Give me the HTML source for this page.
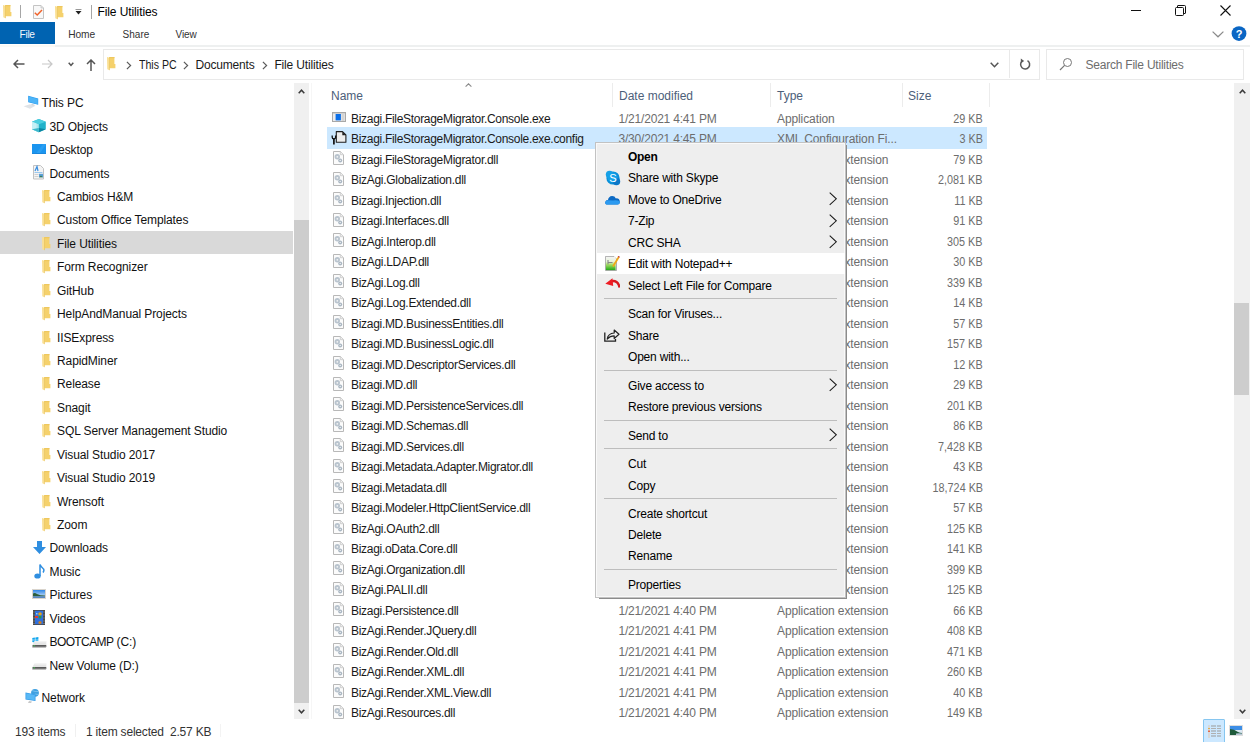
<!DOCTYPE html>
<html><head><meta charset="utf-8">
<style>
*{margin:0;padding:0;box-sizing:border-box}
html,body{width:1250px;height:742px;overflow:hidden;background:#fff}
body{position:relative;font-family:"Liberation Sans",sans-serif;font-size:12px}
.t{position:absolute;white-space:nowrap;line-height:14px;font-size:12px}
.i{position:absolute;display:block}
.b{position:absolute}
</style></head><body>

<svg class="i" style="left:2.7px;top:4.7px" width="9" height="14" viewBox="0 0 9 14"><path d="M2.2 0 H7.4 V7 H8.4 V11.3 H2.2 Z" fill="#f5d16c"/><path d="M2.2 0 H7.4 V1.2 H2.2 Z" fill="#eec75e"/><path d="M0 0.1 L2.4 0.7 V13.2 L0.3 12.3 Z" fill="#fadf92"/><path d="M2 0.6 L2.6 0.8 V13.2 L2 13 Z" fill="#e6bf55"/></svg>
<div class="b" style="left:20px;top:4.8px;width:1px;height:13px;background:#a6a6a6"></div>
<svg class="i" style="left:33.3px;top:5px" width="11" height="14" viewBox="0 0 11 14"><path d="M0.5 0.5 H8 L10.5 3 V13.5 H0.5 Z" fill="#f8f8f8" stroke="#c4c4c4"/><path d="M8 0.5 V3 H10.5" fill="#e0e0e0" stroke="#c8c8c8" stroke-width="0.8"/><path d="M1.8 7.8 L4.2 10 L9 5" fill="none" stroke="#f0622a" stroke-width="1.5"/></svg>
<svg class="i" style="left:55px;top:5.8px" width="9" height="14" viewBox="0 0 9 14"><path d="M2.2 0 H7.4 V7 H8.4 V11.3 H2.2 Z" fill="#f5d16c"/><path d="M2.2 0 H7.4 V1.2 H2.2 Z" fill="#eec75e"/><path d="M0 0.1 L2.4 0.7 V13.2 L0.3 12.3 Z" fill="#fadf92"/><path d="M2 0.6 L2.6 0.8 V13.2 L2 13 Z" fill="#e6bf55"/></svg>
<svg class="i" style="left:75px;top:9px" width="7" height="6" viewBox="0 0 7 6"><rect x="0.5" y="0" width="6" height="1" fill="#999"/><path d="M0.5 2 H6.5 L3.5 5.5 Z" fill="#222"/></svg>
<div class="b" style="left:91px;top:4.8px;width:1px;height:14px;background:#a6a6a6"></div>
<div class="t" style="left:97.5px;top:5.00px;color:#000;letter-spacing:-0.1px">File Utilities</div>
<div class="b" style="left:1131px;top:10px;width:10px;height:1px;background:#111"></div>
<svg class="i" style="left:1175px;top:5px" width="11" height="11" viewBox="0 0 11 11"><path d="M2.5 2.5 V1 Q2.5 0.5 3 0.5 H9.5 Q10.5 0.5 10.5 1.5 V8 Q10.5 8.5 10 8.5 H8.5" fill="none" stroke="#111"/><rect x="0.5" y="2.5" width="8" height="8" rx="1" fill="#fff" stroke="#111"/></svg>
<svg class="i" style="left:1220px;top:5px" width="11" height="11" viewBox="0 0 11 11"><path d="M0.5 0.5 L10.5 10.5 M10.5 0.5 L0.5 10.5" stroke="#111" stroke-width="1.1"/></svg>
<div class="b" style="left:0;top:22px;width:55px;height:22.2px;background:#0063b1"></div>
<div class="t" style="left:19.6px;top:27.80px;color:#f4f8fc;font-size:10.2px;letter-spacing:-0.35px">File</div>
<div class="t" style="left:68.2px;top:28.00px;color:#333;font-size:10.2px;letter-spacing:-0.1px">Home</div>
<div class="t" style="left:122.6px;top:28.00px;color:#333;font-size:10px">Share</div>
<div class="t" style="left:175.5px;top:28.00px;color:#333;font-size:10px;letter-spacing:-0.1px">View</div>
<div class="b" style="left:55px;top:45.3px;width:1195px;height:1.5px;background:#eef0f0"></div>
<div class="b" style="left:0;top:45.3px;width:55px;height:1.5px;background:#fbfaf6"></div>
<svg class="i" style="left:1212px;top:31px" width="12" height="7" viewBox="0 0 12 7"><path d="M0.6 0.6 L6 5.8 L11.4 0.6" fill="none" stroke="#8a8a8a" stroke-width="1.2"/></svg>
<svg class="i" style="left:1231px;top:26px" width="16" height="16" viewBox="0 0 16 16"><circle cx="8" cy="7.6" r="7.4" fill="#0a66c4"/><text x="8.2" y="11.8" font-size="11" font-weight="bold" text-anchor="middle" fill="#fff" font-family="Liberation Sans">?</text></svg>
<svg class="i" style="left:13px;top:59px" width="12" height="10" viewBox="0 0 12 10"><path d="M11.5 5 H1 M5 1 L1 5 L5 9" fill="none" stroke="#555" stroke-width="1.5"/></svg>
<svg class="i" style="left:42px;top:59px" width="11" height="10" viewBox="0 0 11 10"><path d="M0 5 H10 M6 1 L10 5 L6 9" fill="none" stroke="#c8c8c8" stroke-width="1.2"/></svg>
<svg class="i" style="left:68px;top:62.2px" width="6" height="4.5" viewBox="0 0 6 4.5"><path d="M0.7 0.7 L3 3.4 L5.3 0.7" fill="none" stroke="#555" stroke-width="1.5"/></svg>
<svg class="i" style="left:86px;top:59px" width="10" height="12" viewBox="0 0 10 12"><path d="M5 12 V1 M1 5 L5 1 L9 5" fill="none" stroke="#555" stroke-width="1.5"/></svg>
<div class="b" style="left:103px;top:48.5px;width:937px;height:31px;border:1px solid #e9e9e9"></div>
<div class="b" style="left:1009px;top:49px;width:1px;height:29px;background:#e9e9e9"></div>
<svg class="i" style="left:107px;top:57.3px" width="9" height="14" viewBox="0 0 9 14"><path d="M2.2 0 H7.4 V7 H8.4 V11.3 H2.2 Z" fill="#f5d16c"/><path d="M2.2 0 H7.4 V1.2 H2.2 Z" fill="#eec75e"/><path d="M0 0.1 L2.4 0.7 V13.2 L0.3 12.3 Z" fill="#fadf92"/><path d="M2 0.6 L2.6 0.8 V13.2 L2 13 Z" fill="#e6bf55"/></svg>
<svg class="i" style="left:126.3px;top:60.5px" width="6" height="9" viewBox="0 0 6 9"><path d="M0.9 0.9 L4.6 4.5 L0.9 8.1" fill="none" stroke="#5a5a5a" stroke-width="1.2"/></svg>
<div class="t" style="left:138.6px;top:57.50px;color:#1a1a1a;transform:scaleX(0.88);transform-origin:0 0">This PC</div>
<svg class="i" style="left:183.3px;top:60.5px" width="6" height="9" viewBox="0 0 6 9"><path d="M0.9 0.9 L4.6 4.5 L0.9 8.1" fill="none" stroke="#5a5a5a" stroke-width="1.2"/></svg>
<div class="t" style="left:195.6px;top:57.50px;color:#1a1a1a;letter-spacing:-0.2px">Documents</div>
<svg class="i" style="left:262.1px;top:60.5px" width="6" height="9" viewBox="0 0 6 9"><path d="M0.9 0.9 L4.6 4.5 L0.9 8.1" fill="none" stroke="#5a5a5a" stroke-width="1.2"/></svg>
<div class="t" style="left:274.4px;top:57.50px;color:#1a1a1a;letter-spacing:-0.15px">File Utilities</div>
<svg class="i" style="left:990px;top:61.8px" width="9" height="6" viewBox="0 0 9 6"><path d="M0.7 0.7 L4.5 4.7 L8.3 0.7" fill="none" stroke="#555" stroke-width="1.5"/></svg>
<svg class="i" style="left:1018.5px;top:57.6px" width="12" height="13" viewBox="0 0 12 13"><path d="M3.2 3 A4.5 4.5 0 1 0 8.5 2.6" fill="none" stroke="#5a5a5a" stroke-width="1.5"/><path d="M1.8 0.5 L5.2 3 L1.8 5.2 Z" fill="#5a5a5a"/></svg>
<div class="b" style="left:1046px;top:48.5px;width:198px;height:31px;border:1px solid #e9e9e9"></div>
<svg class="i" style="left:1059px;top:57px" width="14" height="14" viewBox="0 0 14 14"><circle cx="8.5" cy="5.5" r="4" fill="none" stroke="#777" stroke-width="1"/><path d="M5.6 8.4 L1 13" stroke="#777" stroke-width="1.2"/></svg>
<div class="t" style="left:1085.5px;top:57.50px;color:#6d6d6d;letter-spacing:-0.22px">Search File Utilities</div>
<div class="b" style="left:0;top:231px;width:292.5px;height:22.6px;background:#d9d9d9"></div>
<div class="t" style="left:41.5px;top:96.30px;color:#111;letter-spacing:-0.1px">This PC</div>
<div class="t" style="left:49.5px;top:119.73px;color:#111;letter-spacing:-0.1px">3D Objects</div>
<div class="t" style="left:49.5px;top:143.16px;color:#111;letter-spacing:-0.1px">Desktop</div>
<div class="t" style="left:49.5px;top:166.59px;color:#111;letter-spacing:-0.1px">Documents</div>
<div class="t" style="left:57px;top:190.02px;color:#111;letter-spacing:-0.1px">Cambios H&amp;M</div>
<svg class="i" style="left:41.5px;top:189.92px" width="9" height="14" viewBox="0 0 9 14"><path d="M2.2 0 H7.4 V7 H8.4 V11.3 H2.2 Z" fill="#f5d16c"/><path d="M2.2 0 H7.4 V1.2 H2.2 Z" fill="#eec75e"/><path d="M0 0.1 L2.4 0.7 V13.2 L0.3 12.3 Z" fill="#fadf92"/><path d="M2 0.6 L2.6 0.8 V13.2 L2 13 Z" fill="#e6bf55"/></svg>
<div class="t" style="left:57px;top:213.45px;color:#111;letter-spacing:-0.1px">Custom Office Templates</div>
<svg class="i" style="left:41.5px;top:213.35px" width="9" height="14" viewBox="0 0 9 14"><path d="M2.2 0 H7.4 V7 H8.4 V11.3 H2.2 Z" fill="#f5d16c"/><path d="M2.2 0 H7.4 V1.2 H2.2 Z" fill="#eec75e"/><path d="M0 0.1 L2.4 0.7 V13.2 L0.3 12.3 Z" fill="#fadf92"/><path d="M2 0.6 L2.6 0.8 V13.2 L2 13 Z" fill="#e6bf55"/></svg>
<div class="t" style="left:57px;top:236.88px;color:#111;letter-spacing:-0.1px">File Utilities</div>
<svg class="i" style="left:41.5px;top:236.78px" width="9" height="14" viewBox="0 0 9 14"><path d="M2.2 0 H7.4 V7 H8.4 V11.3 H2.2 Z" fill="#f5d16c"/><path d="M2.2 0 H7.4 V1.2 H2.2 Z" fill="#eec75e"/><path d="M0 0.1 L2.4 0.7 V13.2 L0.3 12.3 Z" fill="#fadf92"/><path d="M2 0.6 L2.6 0.8 V13.2 L2 13 Z" fill="#e6bf55"/></svg>
<div class="t" style="left:57px;top:260.31px;color:#111;letter-spacing:-0.1px">Form Recognizer</div>
<svg class="i" style="left:41.5px;top:260.21px" width="9" height="14" viewBox="0 0 9 14"><path d="M2.2 0 H7.4 V7 H8.4 V11.3 H2.2 Z" fill="#f5d16c"/><path d="M2.2 0 H7.4 V1.2 H2.2 Z" fill="#eec75e"/><path d="M0 0.1 L2.4 0.7 V13.2 L0.3 12.3 Z" fill="#fadf92"/><path d="M2 0.6 L2.6 0.8 V13.2 L2 13 Z" fill="#e6bf55"/></svg>
<div class="t" style="left:57px;top:283.74px;color:#111;letter-spacing:-0.1px">GitHub</div>
<svg class="i" style="left:41.5px;top:283.64px" width="9" height="14" viewBox="0 0 9 14"><path d="M2.2 0 H7.4 V7 H8.4 V11.3 H2.2 Z" fill="#f5d16c"/><path d="M2.2 0 H7.4 V1.2 H2.2 Z" fill="#eec75e"/><path d="M0 0.1 L2.4 0.7 V13.2 L0.3 12.3 Z" fill="#fadf92"/><path d="M2 0.6 L2.6 0.8 V13.2 L2 13 Z" fill="#e6bf55"/></svg>
<div class="t" style="left:57px;top:307.17px;color:#111;letter-spacing:-0.1px">HelpAndManual Projects</div>
<svg class="i" style="left:41.5px;top:307.07px" width="9" height="14" viewBox="0 0 9 14"><path d="M2.2 0 H7.4 V7 H8.4 V11.3 H2.2 Z" fill="#f5d16c"/><path d="M2.2 0 H7.4 V1.2 H2.2 Z" fill="#eec75e"/><path d="M0 0.1 L2.4 0.7 V13.2 L0.3 12.3 Z" fill="#fadf92"/><path d="M2 0.6 L2.6 0.8 V13.2 L2 13 Z" fill="#e6bf55"/></svg>
<div class="t" style="left:57px;top:330.60px;color:#111;letter-spacing:-0.1px">IISExpress</div>
<svg class="i" style="left:41.5px;top:330.5px" width="9" height="14" viewBox="0 0 9 14"><path d="M2.2 0 H7.4 V7 H8.4 V11.3 H2.2 Z" fill="#f5d16c"/><path d="M2.2 0 H7.4 V1.2 H2.2 Z" fill="#eec75e"/><path d="M0 0.1 L2.4 0.7 V13.2 L0.3 12.3 Z" fill="#fadf92"/><path d="M2 0.6 L2.6 0.8 V13.2 L2 13 Z" fill="#e6bf55"/></svg>
<div class="t" style="left:57px;top:354.03px;color:#111;letter-spacing:-0.1px">RapidMiner</div>
<svg class="i" style="left:41.5px;top:353.93px" width="9" height="14" viewBox="0 0 9 14"><path d="M2.2 0 H7.4 V7 H8.4 V11.3 H2.2 Z" fill="#f5d16c"/><path d="M2.2 0 H7.4 V1.2 H2.2 Z" fill="#eec75e"/><path d="M0 0.1 L2.4 0.7 V13.2 L0.3 12.3 Z" fill="#fadf92"/><path d="M2 0.6 L2.6 0.8 V13.2 L2 13 Z" fill="#e6bf55"/></svg>
<div class="t" style="left:57px;top:377.46px;color:#111;letter-spacing:-0.1px">Release</div>
<svg class="i" style="left:41.5px;top:377.35999999999996px" width="9" height="14" viewBox="0 0 9 14"><path d="M2.2 0 H7.4 V7 H8.4 V11.3 H2.2 Z" fill="#f5d16c"/><path d="M2.2 0 H7.4 V1.2 H2.2 Z" fill="#eec75e"/><path d="M0 0.1 L2.4 0.7 V13.2 L0.3 12.3 Z" fill="#fadf92"/><path d="M2 0.6 L2.6 0.8 V13.2 L2 13 Z" fill="#e6bf55"/></svg>
<div class="t" style="left:57px;top:400.89px;color:#111;letter-spacing:-0.1px">Snagit</div>
<svg class="i" style="left:41.5px;top:400.78999999999996px" width="9" height="14" viewBox="0 0 9 14"><path d="M2.2 0 H7.4 V7 H8.4 V11.3 H2.2 Z" fill="#f5d16c"/><path d="M2.2 0 H7.4 V1.2 H2.2 Z" fill="#eec75e"/><path d="M0 0.1 L2.4 0.7 V13.2 L0.3 12.3 Z" fill="#fadf92"/><path d="M2 0.6 L2.6 0.8 V13.2 L2 13 Z" fill="#e6bf55"/></svg>
<div class="t" style="left:57px;top:424.32px;color:#111;letter-spacing:-0.1px">SQL Server Management Studio</div>
<svg class="i" style="left:41.5px;top:424.21999999999997px" width="9" height="14" viewBox="0 0 9 14"><path d="M2.2 0 H7.4 V7 H8.4 V11.3 H2.2 Z" fill="#f5d16c"/><path d="M2.2 0 H7.4 V1.2 H2.2 Z" fill="#eec75e"/><path d="M0 0.1 L2.4 0.7 V13.2 L0.3 12.3 Z" fill="#fadf92"/><path d="M2 0.6 L2.6 0.8 V13.2 L2 13 Z" fill="#e6bf55"/></svg>
<div class="t" style="left:57px;top:447.75px;color:#111;letter-spacing:-0.1px">Visual Studio 2017</div>
<svg class="i" style="left:41.5px;top:447.65px" width="9" height="14" viewBox="0 0 9 14"><path d="M2.2 0 H7.4 V7 H8.4 V11.3 H2.2 Z" fill="#f5d16c"/><path d="M2.2 0 H7.4 V1.2 H2.2 Z" fill="#eec75e"/><path d="M0 0.1 L2.4 0.7 V13.2 L0.3 12.3 Z" fill="#fadf92"/><path d="M2 0.6 L2.6 0.8 V13.2 L2 13 Z" fill="#e6bf55"/></svg>
<div class="t" style="left:57px;top:471.18px;color:#111;letter-spacing:-0.1px">Visual Studio 2019</div>
<svg class="i" style="left:41.5px;top:471.08px" width="9" height="14" viewBox="0 0 9 14"><path d="M2.2 0 H7.4 V7 H8.4 V11.3 H2.2 Z" fill="#f5d16c"/><path d="M2.2 0 H7.4 V1.2 H2.2 Z" fill="#eec75e"/><path d="M0 0.1 L2.4 0.7 V13.2 L0.3 12.3 Z" fill="#fadf92"/><path d="M2 0.6 L2.6 0.8 V13.2 L2 13 Z" fill="#e6bf55"/></svg>
<div class="t" style="left:57px;top:494.61px;color:#111;letter-spacing:-0.1px">Wrensoft</div>
<svg class="i" style="left:41.5px;top:494.51px" width="9" height="14" viewBox="0 0 9 14"><path d="M2.2 0 H7.4 V7 H8.4 V11.3 H2.2 Z" fill="#f5d16c"/><path d="M2.2 0 H7.4 V1.2 H2.2 Z" fill="#eec75e"/><path d="M0 0.1 L2.4 0.7 V13.2 L0.3 12.3 Z" fill="#fadf92"/><path d="M2 0.6 L2.6 0.8 V13.2 L2 13 Z" fill="#e6bf55"/></svg>
<div class="t" style="left:57px;top:518.04px;color:#111;letter-spacing:-0.1px">Zoom</div>
<svg class="i" style="left:41.5px;top:517.9399999999999px" width="9" height="14" viewBox="0 0 9 14"><path d="M2.2 0 H7.4 V7 H8.4 V11.3 H2.2 Z" fill="#f5d16c"/><path d="M2.2 0 H7.4 V1.2 H2.2 Z" fill="#eec75e"/><path d="M0 0.1 L2.4 0.7 V13.2 L0.3 12.3 Z" fill="#fadf92"/><path d="M2 0.6 L2.6 0.8 V13.2 L2 13 Z" fill="#e6bf55"/></svg>
<div class="t" style="left:49.5px;top:541.47px;color:#111;letter-spacing:-0.1px">Downloads</div>
<div class="t" style="left:49.5px;top:564.90px;color:#111;letter-spacing:-0.1px">Music</div>
<div class="t" style="left:49.5px;top:588.33px;color:#111;letter-spacing:-0.1px">Pictures</div>
<div class="t" style="left:49.5px;top:611.76px;color:#111;letter-spacing:-0.1px">Videos</div>
<div class="t" style="left:49.5px;top:635.19px;color:#111;letter-spacing:-0.1px"><span style="letter-spacing:-0.6px">BOOTCAMP</span> (C:)</div>
<div class="t" style="left:49.5px;top:658.62px;color:#111;letter-spacing:-0.1px">New Volume (D:)</div>
<svg class="i" style="left:22px;top:92px" width="20" height="20" viewBox="0 0 20 20"><path d="M6.2 3.8 L16.2 6.6 V12.8 L6.2 10.2 Z" fill="#2a9cf0"/><path d="M6.7 4.5 L15.7 7 V12.2 L6.7 9.8 Z" fill="#4db4f7"/><path d="M1.6 14.3 L8 12.3 L13.5 13.8 L8 16.8 Z" fill="#dfe3e7"/><path d="M9.5 12 L12.5 12.8 V13.6 L9.5 13 Z" fill="#c2c8ce"/></svg>
<svg class="i" style="left:32.2px;top:118.7px" width="14" height="14" viewBox="0 0 14 14"><path d="M6.8 0 L13.8 2.8 V10.3 L6.8 13.3 L0 10.3 V2.8 Z" fill="#22b2ca"/><path d="M0 2.8 L6.8 0 L13.8 2.8 L6.8 5.2 Z" fill="#4ccfe0"/><path d="M0 2.8 L6.8 5.2 V13.3 L0 10.3 Z" fill="#a8e6ef"/><path d="M0 2.8 L4.5 4.4 V11.8 L0 10.3 Z" fill="#c4f0f6"/><path d="M6.8 9 L13.8 10.3 L6.8 13.3 Z" fill="#0c86a2"/><path d="M6.8 9 L0 10.3 L6.8 13.3 Z" fill="#3bb8cc"/></svg>
<svg class="i" style="left:32.2px;top:144px" width="14" height="10" viewBox="0 0 14 10"><rect x="0" y="0" width="14" height="9.8" fill="#1b95ef"/><path d="M4 9.8 L11 0 H14 V0.5 L7.5 9.8Z" fill="#2a9ff3"/><rect x="0" y="9" width="14" height="0.8" fill="#0f7fd6"/></svg>
<svg class="i" style="left:33.4px;top:164.8px" width="11" height="15" viewBox="0 0 11 15"><path d="M0.5 0.5 H7.5 L10.5 3.5 V14 H0.5 Z" fill="#f4f4f4" stroke="#c2c2c2"/><path d="M2 6 L4 1.5 L5 6" fill="none" stroke="#3a8ee0" stroke-width="1.2"/><rect x="1.5" y="7" width="8" height="1" fill="#9cc8ee"/><rect x="1.5" y="9" width="4" height="0.8" fill="#c8c8c8"/><rect x="1.5" y="11" width="4" height="0.8" fill="#c8c8c8"/><rect x="6" y="8.8" width="4" height="3.5" fill="#5aa0d8"/><path d="M6 12.3 L8 10.5 L10 12.3 Z" fill="#3c7a48"/></svg>
<svg class="i" style="left:32.5px;top:541px" width="13" height="13" viewBox="0 0 13 13"><path d="M4 0 H9 V6 H13 L6.5 13 L0 6 H4 Z" fill="#2f8ee0"/></svg>
<svg class="i" style="left:34px;top:563.5px" width="11" height="15" viewBox="0 0 11 15"><ellipse cx="3.5" cy="12" rx="3.2" ry="2.6" fill="#2f8ee0"/><path d="M6 12 V0.5 Q7 3 9.5 5 Q10.5 6.5 9 8.5" fill="none" stroke="#2f8ee0" stroke-width="1.5"/></svg>
<svg class="i" style="left:32.3px;top:588.8px" width="14" height="10" viewBox="0 0 14 10"><defs><linearGradient id="sky" x1="0" y1="0" x2="0" y2="1"><stop offset="0" stop-color="#2f86e6"/><stop offset="1" stop-color="#e8f2fa"/></linearGradient></defs><rect x="0" y="0" width="14" height="10" fill="#d9d4cc"/><rect x="1" y="1" width="12" height="8" fill="url(#sky)"/><path d="M1 4.5 Q3 3.5 5 5 Q8 6.5 13 6.5 V7.5 H1 Z" fill="#2c5e3c"/><rect x="1" y="7.3" width="12" height="1.7" fill="#5a88c0"/></svg>
<svg class="i" style="left:33.2px;top:610.2px" width="12" height="15" viewBox="0 0 12 15"><rect x="0" y="0" width="12" height="15" fill="#4a4a4a"/><g fill="#9a9a9a"><rect x="0.5" y="1.5" width="1" height="1"/><rect x="0.5" y="4.5" width="1" height="1"/><rect x="0.5" y="7.5" width="1" height="1"/><rect x="0.5" y="10.5" width="1" height="1"/><rect x="0.5" y="13" width="1" height="1"/><rect x="10.5" y="1.5" width="1" height="1"/><rect x="10.5" y="4.5" width="1" height="1"/><rect x="10.5" y="7.5" width="1" height="1"/><rect x="10.5" y="10.5" width="1" height="1"/><rect x="10.5" y="13" width="1" height="1"/></g><rect x="2" y="0.8" width="8" height="13.4" fill="#2f6fdc"/><circle cx="7" cy="4" r="1.8" fill="#e0a020"/><rect x="2" y="6" width="3" height="2" fill="#e03a30"/><circle cx="7" cy="7" r="1.5" fill="#2a9a40"/><circle cx="7" cy="12.5" r="1.6" fill="#d08020"/><rect x="3" y="3" width="1.5" height="1.5" fill="#8fd0f0"/></svg>
<svg class="i" style="left:31.5px;top:637px" width="15" height="11" viewBox="0 0 15 11"><g fill="#12a6ee"><path d="M0.3 0.9 L2.9 0.5 V2.7 H0.3Z"/><path d="M3.4 0.4 L6.4 0 V2.7 H3.4Z"/><path d="M0.3 3.2 H2.9 V5.4 L0.3 5Z"/><path d="M3.4 3.2 H6.4 V5.9 L3.4 5.5Z"/></g><path d="M0.5 8 L2.5 4.3 H14.3 L14.3 8 Z" fill="#e6e6e6"/><path d="M2.5 4.3 H14.3 V5.2 H2.3Z" fill="#f6f6f6"/><path d="M0.5 8 H14.3 V10 L13.5 10.6 H0.5 Z" fill="#5a5a5a"/><path d="M0.5 9.8 H13.5 L14.3 9.2 V10 L13.5 10.6 H0.5 Z" fill="#cfcfcf"/><rect x="1.5" y="8.4" width="1.5" height="0.9" fill="#40d050"/></svg>
<svg class="i" style="left:31.5px;top:662px" width="15" height="9" viewBox="0 0 15 9"><path d="M0.5 5 L2.5 1.5 H14.3 L14.3 5 Z" fill="#e6e6e6"/><path d="M2.5 1.5 H14.3 V2.4 H2.3Z" fill="#f6f6f6"/><path d="M0.5 5 H14.3 V7 L13.5 7.6 H0.5 Z" fill="#5a5a5a"/><path d="M0.5 6.8 H13.5 L14.3 6.2 V7 L13.5 7.6 H0.5 Z" fill="#cfcfcf"/><rect x="1.5" y="5.4" width="1.5" height="0.9" fill="#40d050"/></svg>
<div class="t" style="left:41.5px;top:690.50px;color:#111;letter-spacing:-0.1px">Network</div>
<svg class="i" style="left:24.5px;top:688px" width="14" height="16" viewBox="0 0 14 16"><circle cx="10" cy="4.8" r="3.9" fill="#3fa0e0"/><path d="M7 2.5 Q10 4 13.5 3.5 M8 7 Q10 5.5 13.5 6.5" stroke="#9ad2f5" stroke-width="0.6" fill="none"/><path d="M0.5 4.5 L10.5 6.5 V13 L0.5 11.5 Z" fill="#2f98e8"/><path d="M1.2 5.3 L9.8 7 V12.2 L1.2 10.9 Z" fill="#58b8f5"/><path d="M4 13 L7 13.5 L6 15 H3 Z" fill="#c8c8c8"/></svg>
<div class="b" style="left:293.5px;top:82.7px;width:15.5px;height:636px;background:#f0f0f0"></div>
<div class="b" style="left:293.5px;top:219.6px;width:15.5px;height:483px;background:#cdcdcd"></div>
<div class="b" style="left:311px;top:82.7px;width:1px;height:636px;background:#f6f6f6"></div>
<svg class="i" style="left:298px;top:89.3px" width="7" height="5" viewBox="0 0 7 5"><path d="M0.7 4.3 L3.5 1.2 L6.3 4.3" fill="none" stroke="#3c3c3c" stroke-width="1.5"/></svg>
<svg class="i" style="left:298px;top:709px" width="7" height="5" viewBox="0 0 7 5"><path d="M0.7 0.7 L3.5 3.8 L6.3 0.7" fill="none" stroke="#3c3c3c" stroke-width="1.5"/></svg>
<svg class="i" style="left:464.5px;top:82.5px" width="7" height="4.5" viewBox="0 0 7 4.5"><path d="M0.6 3.6 L3.5 0.8 L6.4 3.6" fill="none" stroke="#8a8a8a" stroke-width="1.1"/></svg>
<div class="t" style="left:331px;top:89.00px;color:#4c607a;">Name</div>
<div class="t" style="left:619px;top:89.00px;color:#4c607a;">Date modified</div>
<div class="t" style="left:777px;top:89.00px;color:#4c607a;">Type</div>
<div class="t" style="left:908px;top:89.00px;color:#4c607a;">Size</div>
<div class="b" style="left:612px;top:82.6px;width:1px;height:24.3px;background:#ececec"></div>
<div class="b" style="left:770px;top:82.6px;width:1px;height:24.3px;background:#ececec"></div>
<div class="b" style="left:902px;top:82.6px;width:1px;height:24.3px;background:#ececec"></div>
<div class="b" style="left:989px;top:82.6px;width:1px;height:24.3px;background:#ececec"></div>
<div class="b" style="left:327px;top:127.2px;width:660px;height:21.5px;background:#cce8ff"></div>
<div class="t" style="left:351px;top:111.90px;color:#1a1a1a;letter-spacing:-0.3px">Bizagi.FileStorageMigrator.Console.exe</div>
<div class="t" style="left:618.5px;top:111.90px;color:#6d6d6d;letter-spacing:-0.2px">1/21/2021 4:41 PM</div>
<div class="t" style="left:777px;top:111.90px;color:#6d6d6d;letter-spacing:-0.1px">Application</div>
<div class="t" style="right:267.4px;top:111.90px;color:#6d6d6d;transform:scaleX(0.9);transform-origin:100% 0">29 KB</div>
<svg class="i" style="left:332px;top:111.7px" width="14" height="10" viewBox="0 0 14 10"><rect x="0.5" y="0.5" width="13" height="9" fill="#ececec" stroke="#a8a8a8"/><rect x="1" y="1" width="12" height="1" fill="#d0d0d0"/><rect x="9.5" y="1.5" width="3" height="7.5" fill="#d4d4d4"/><rect x="3.6" y="2" width="5.3" height="6.4" fill="#0b6fe8"/></svg>
<div class="t" style="left:351px;top:132.39px;color:#1a1a1a;letter-spacing:-0.3px">Bizagi.FileStorageMigrator.Console.exe.config</div>
<div class="t" style="left:618.5px;top:132.39px;color:#6d6d6d;letter-spacing:-0.2px">3/30/2021 4:45 PM</div>
<div class="t" style="left:777px;top:132.39px;color:#6d6d6d;letter-spacing:-0.1px">XML Configuration Fi...</div>
<div class="t" style="right:267.4px;top:132.39px;color:#6d6d6d;transform:scaleX(0.9);transform-origin:100% 0">3 KB</div>
<svg class="i" style="left:331px;top:130.6px" width="16" height="15" viewBox="0 0 16 15"><path d="M5.3 0.6 H11.5 L14.9 4 V11.3 H5.3 Z" fill="#ededed" stroke="#1e1e1e" stroke-width="1.1" stroke-linejoin="round"/><path d="M11.3 0.8 L14.7 4.2 L11.3 4.2 Z" fill="#1e1e1e"/><path d="M1.2 4.6 V6.2 Q1.2 7.8 2.9 7.8 Q4.6 7.8 4.6 6.2 V4.6" fill="none" stroke="#111" stroke-width="1.3"/><path d="M2.9 7.5 V13.4" stroke="#111" stroke-width="1.7"/></svg>
<div class="t" style="left:351px;top:152.88px;color:#1a1a1a;letter-spacing:-0.3px">Bizagi.FileStorageMigrator.dll</div>
<div class="t" style="left:618.5px;top:152.88px;color:#6d6d6d;letter-spacing:-0.2px">1/21/2021 4:41 PM</div>
<div class="t" style="left:777px;top:152.88px;color:#6d6d6d;letter-spacing:-0.1px">Application extension</div>
<div class="t" style="right:267.4px;top:152.88px;color:#6d6d6d;transform:scaleX(0.9);transform-origin:100% 0">79 KB</div>
<svg class="i" style="left:333.2px;top:151.28px" width="11" height="14" viewBox="0 0 11 14"><path d="M0.5 0.5 H7.3 L10.5 3.7 V13.5 H0.5 Z" fill="#fbfbfb" stroke="#b8b8b8"/><path d="M7.3 0.5 V3.7 H10.5" fill="#eee" stroke="#c8c8c8" stroke-width="0.8"/><circle cx="4.3" cy="5.8" r="2.7" fill="#b9c4ce"/><circle cx="4.3" cy="5.8" r="0.9" fill="#f4f4f4"/><circle cx="7.2" cy="9.4" r="2" fill="#a9b6c2"/><circle cx="7.2" cy="9.4" r="0.7" fill="#f4f4f4"/></svg>
<div class="t" style="left:351px;top:173.37px;color:#1a1a1a;letter-spacing:-0.3px">BizAgi.Globalization.dll</div>
<div class="t" style="left:618.5px;top:173.37px;color:#6d6d6d;letter-spacing:-0.2px">1/21/2021 4:41 PM</div>
<div class="t" style="left:777px;top:173.37px;color:#6d6d6d;letter-spacing:-0.1px">Application extension</div>
<div class="t" style="right:267.4px;top:173.37px;color:#6d6d6d;transform:scaleX(0.9);transform-origin:100% 0">2,081 KB</div>
<svg class="i" style="left:333.2px;top:171.77px" width="11" height="14" viewBox="0 0 11 14"><path d="M0.5 0.5 H7.3 L10.5 3.7 V13.5 H0.5 Z" fill="#fbfbfb" stroke="#b8b8b8"/><path d="M7.3 0.5 V3.7 H10.5" fill="#eee" stroke="#c8c8c8" stroke-width="0.8"/><circle cx="4.3" cy="5.8" r="2.7" fill="#b9c4ce"/><circle cx="4.3" cy="5.8" r="0.9" fill="#f4f4f4"/><circle cx="7.2" cy="9.4" r="2" fill="#a9b6c2"/><circle cx="7.2" cy="9.4" r="0.7" fill="#f4f4f4"/></svg>
<div class="t" style="left:351px;top:193.86px;color:#1a1a1a;letter-spacing:-0.3px">Bizagi.Injection.dll</div>
<div class="t" style="left:618.5px;top:193.86px;color:#6d6d6d;letter-spacing:-0.2px">1/21/2021 4:41 PM</div>
<div class="t" style="left:777px;top:193.86px;color:#6d6d6d;letter-spacing:-0.1px">Application extension</div>
<div class="t" style="right:267.4px;top:193.86px;color:#6d6d6d;transform:scaleX(0.9);transform-origin:100% 0">11 KB</div>
<svg class="i" style="left:333.2px;top:192.26000000000002px" width="11" height="14" viewBox="0 0 11 14"><path d="M0.5 0.5 H7.3 L10.5 3.7 V13.5 H0.5 Z" fill="#fbfbfb" stroke="#b8b8b8"/><path d="M7.3 0.5 V3.7 H10.5" fill="#eee" stroke="#c8c8c8" stroke-width="0.8"/><circle cx="4.3" cy="5.8" r="2.7" fill="#b9c4ce"/><circle cx="4.3" cy="5.8" r="0.9" fill="#f4f4f4"/><circle cx="7.2" cy="9.4" r="2" fill="#a9b6c2"/><circle cx="7.2" cy="9.4" r="0.7" fill="#f4f4f4"/></svg>
<div class="t" style="left:351px;top:214.35px;color:#1a1a1a;letter-spacing:-0.3px">Bizagi.Interfaces.dll</div>
<div class="t" style="left:618.5px;top:214.35px;color:#6d6d6d;letter-spacing:-0.2px">1/21/2021 4:41 PM</div>
<div class="t" style="left:777px;top:214.35px;color:#6d6d6d;letter-spacing:-0.1px">Application extension</div>
<div class="t" style="right:267.4px;top:214.35px;color:#6d6d6d;transform:scaleX(0.9);transform-origin:100% 0">91 KB</div>
<svg class="i" style="left:333.2px;top:212.75px" width="11" height="14" viewBox="0 0 11 14"><path d="M0.5 0.5 H7.3 L10.5 3.7 V13.5 H0.5 Z" fill="#fbfbfb" stroke="#b8b8b8"/><path d="M7.3 0.5 V3.7 H10.5" fill="#eee" stroke="#c8c8c8" stroke-width="0.8"/><circle cx="4.3" cy="5.8" r="2.7" fill="#b9c4ce"/><circle cx="4.3" cy="5.8" r="0.9" fill="#f4f4f4"/><circle cx="7.2" cy="9.4" r="2" fill="#a9b6c2"/><circle cx="7.2" cy="9.4" r="0.7" fill="#f4f4f4"/></svg>
<div class="t" style="left:351px;top:234.84px;color:#1a1a1a;letter-spacing:-0.3px">BizAgi.Interop.dll</div>
<div class="t" style="left:618.5px;top:234.84px;color:#6d6d6d;letter-spacing:-0.2px">1/21/2021 4:41 PM</div>
<div class="t" style="left:777px;top:234.84px;color:#6d6d6d;letter-spacing:-0.1px">Application extension</div>
<div class="t" style="right:267.4px;top:234.84px;color:#6d6d6d;transform:scaleX(0.9);transform-origin:100% 0">305 KB</div>
<svg class="i" style="left:333.2px;top:233.24px" width="11" height="14" viewBox="0 0 11 14"><path d="M0.5 0.5 H7.3 L10.5 3.7 V13.5 H0.5 Z" fill="#fbfbfb" stroke="#b8b8b8"/><path d="M7.3 0.5 V3.7 H10.5" fill="#eee" stroke="#c8c8c8" stroke-width="0.8"/><circle cx="4.3" cy="5.8" r="2.7" fill="#b9c4ce"/><circle cx="4.3" cy="5.8" r="0.9" fill="#f4f4f4"/><circle cx="7.2" cy="9.4" r="2" fill="#a9b6c2"/><circle cx="7.2" cy="9.4" r="0.7" fill="#f4f4f4"/></svg>
<div class="t" style="left:351px;top:255.33px;color:#1a1a1a;letter-spacing:-0.3px">BizAgi.LDAP.dll</div>
<div class="t" style="left:618.5px;top:255.33px;color:#6d6d6d;letter-spacing:-0.2px">1/21/2021 4:41 PM</div>
<div class="t" style="left:777px;top:255.33px;color:#6d6d6d;letter-spacing:-0.1px">Application extension</div>
<div class="t" style="right:267.4px;top:255.33px;color:#6d6d6d;transform:scaleX(0.9);transform-origin:100% 0">30 KB</div>
<svg class="i" style="left:333.2px;top:253.73px" width="11" height="14" viewBox="0 0 11 14"><path d="M0.5 0.5 H7.3 L10.5 3.7 V13.5 H0.5 Z" fill="#fbfbfb" stroke="#b8b8b8"/><path d="M7.3 0.5 V3.7 H10.5" fill="#eee" stroke="#c8c8c8" stroke-width="0.8"/><circle cx="4.3" cy="5.8" r="2.7" fill="#b9c4ce"/><circle cx="4.3" cy="5.8" r="0.9" fill="#f4f4f4"/><circle cx="7.2" cy="9.4" r="2" fill="#a9b6c2"/><circle cx="7.2" cy="9.4" r="0.7" fill="#f4f4f4"/></svg>
<div class="t" style="left:351px;top:275.82px;color:#1a1a1a;letter-spacing:-0.3px">BizAgi.Log.dll</div>
<div class="t" style="left:618.5px;top:275.82px;color:#6d6d6d;letter-spacing:-0.2px">1/21/2021 4:41 PM</div>
<div class="t" style="left:777px;top:275.82px;color:#6d6d6d;letter-spacing:-0.1px">Application extension</div>
<div class="t" style="right:267.4px;top:275.82px;color:#6d6d6d;transform:scaleX(0.9);transform-origin:100% 0">339 KB</div>
<svg class="i" style="left:333.2px;top:274.21999999999997px" width="11" height="14" viewBox="0 0 11 14"><path d="M0.5 0.5 H7.3 L10.5 3.7 V13.5 H0.5 Z" fill="#fbfbfb" stroke="#b8b8b8"/><path d="M7.3 0.5 V3.7 H10.5" fill="#eee" stroke="#c8c8c8" stroke-width="0.8"/><circle cx="4.3" cy="5.8" r="2.7" fill="#b9c4ce"/><circle cx="4.3" cy="5.8" r="0.9" fill="#f4f4f4"/><circle cx="7.2" cy="9.4" r="2" fill="#a9b6c2"/><circle cx="7.2" cy="9.4" r="0.7" fill="#f4f4f4"/></svg>
<div class="t" style="left:351px;top:296.31px;color:#1a1a1a;letter-spacing:-0.3px">BizAgi.Log.Extended.dll</div>
<div class="t" style="left:618.5px;top:296.31px;color:#6d6d6d;letter-spacing:-0.2px">1/21/2021 4:41 PM</div>
<div class="t" style="left:777px;top:296.31px;color:#6d6d6d;letter-spacing:-0.1px">Application extension</div>
<div class="t" style="right:267.4px;top:296.31px;color:#6d6d6d;transform:scaleX(0.9);transform-origin:100% 0">14 KB</div>
<svg class="i" style="left:333.2px;top:294.71px" width="11" height="14" viewBox="0 0 11 14"><path d="M0.5 0.5 H7.3 L10.5 3.7 V13.5 H0.5 Z" fill="#fbfbfb" stroke="#b8b8b8"/><path d="M7.3 0.5 V3.7 H10.5" fill="#eee" stroke="#c8c8c8" stroke-width="0.8"/><circle cx="4.3" cy="5.8" r="2.7" fill="#b9c4ce"/><circle cx="4.3" cy="5.8" r="0.9" fill="#f4f4f4"/><circle cx="7.2" cy="9.4" r="2" fill="#a9b6c2"/><circle cx="7.2" cy="9.4" r="0.7" fill="#f4f4f4"/></svg>
<div class="t" style="left:351px;top:316.80px;color:#1a1a1a;letter-spacing:-0.3px">Bizagi.MD.BusinessEntities.dll</div>
<div class="t" style="left:618.5px;top:316.80px;color:#6d6d6d;letter-spacing:-0.2px">1/21/2021 4:41 PM</div>
<div class="t" style="left:777px;top:316.80px;color:#6d6d6d;letter-spacing:-0.1px">Application extension</div>
<div class="t" style="right:267.4px;top:316.80px;color:#6d6d6d;transform:scaleX(0.9);transform-origin:100% 0">57 KB</div>
<svg class="i" style="left:333.2px;top:315.19999999999993px" width="11" height="14" viewBox="0 0 11 14"><path d="M0.5 0.5 H7.3 L10.5 3.7 V13.5 H0.5 Z" fill="#fbfbfb" stroke="#b8b8b8"/><path d="M7.3 0.5 V3.7 H10.5" fill="#eee" stroke="#c8c8c8" stroke-width="0.8"/><circle cx="4.3" cy="5.8" r="2.7" fill="#b9c4ce"/><circle cx="4.3" cy="5.8" r="0.9" fill="#f4f4f4"/><circle cx="7.2" cy="9.4" r="2" fill="#a9b6c2"/><circle cx="7.2" cy="9.4" r="0.7" fill="#f4f4f4"/></svg>
<div class="t" style="left:351px;top:337.29px;color:#1a1a1a;letter-spacing:-0.3px">Bizagi.MD.BusinessLogic.dll</div>
<div class="t" style="left:618.5px;top:337.29px;color:#6d6d6d;letter-spacing:-0.2px">1/21/2021 4:41 PM</div>
<div class="t" style="left:777px;top:337.29px;color:#6d6d6d;letter-spacing:-0.1px">Application extension</div>
<div class="t" style="right:267.4px;top:337.29px;color:#6d6d6d;transform:scaleX(0.9);transform-origin:100% 0">157 KB</div>
<svg class="i" style="left:333.2px;top:335.68999999999994px" width="11" height="14" viewBox="0 0 11 14"><path d="M0.5 0.5 H7.3 L10.5 3.7 V13.5 H0.5 Z" fill="#fbfbfb" stroke="#b8b8b8"/><path d="M7.3 0.5 V3.7 H10.5" fill="#eee" stroke="#c8c8c8" stroke-width="0.8"/><circle cx="4.3" cy="5.8" r="2.7" fill="#b9c4ce"/><circle cx="4.3" cy="5.8" r="0.9" fill="#f4f4f4"/><circle cx="7.2" cy="9.4" r="2" fill="#a9b6c2"/><circle cx="7.2" cy="9.4" r="0.7" fill="#f4f4f4"/></svg>
<div class="t" style="left:351px;top:357.78px;color:#1a1a1a;letter-spacing:-0.3px">Bizagi.MD.DescriptorServices.dll</div>
<div class="t" style="left:618.5px;top:357.78px;color:#6d6d6d;letter-spacing:-0.2px">1/21/2021 4:41 PM</div>
<div class="t" style="left:777px;top:357.78px;color:#6d6d6d;letter-spacing:-0.1px">Application extension</div>
<div class="t" style="right:267.4px;top:357.78px;color:#6d6d6d;transform:scaleX(0.9);transform-origin:100% 0">12 KB</div>
<svg class="i" style="left:333.2px;top:356.17999999999995px" width="11" height="14" viewBox="0 0 11 14"><path d="M0.5 0.5 H7.3 L10.5 3.7 V13.5 H0.5 Z" fill="#fbfbfb" stroke="#b8b8b8"/><path d="M7.3 0.5 V3.7 H10.5" fill="#eee" stroke="#c8c8c8" stroke-width="0.8"/><circle cx="4.3" cy="5.8" r="2.7" fill="#b9c4ce"/><circle cx="4.3" cy="5.8" r="0.9" fill="#f4f4f4"/><circle cx="7.2" cy="9.4" r="2" fill="#a9b6c2"/><circle cx="7.2" cy="9.4" r="0.7" fill="#f4f4f4"/></svg>
<div class="t" style="left:351px;top:378.27px;color:#1a1a1a;letter-spacing:-0.3px">Bizagi.MD.dll</div>
<div class="t" style="left:618.5px;top:378.27px;color:#6d6d6d;letter-spacing:-0.2px">1/21/2021 4:41 PM</div>
<div class="t" style="left:777px;top:378.27px;color:#6d6d6d;letter-spacing:-0.1px">Application extension</div>
<div class="t" style="right:267.4px;top:378.27px;color:#6d6d6d;transform:scaleX(0.9);transform-origin:100% 0">29 KB</div>
<svg class="i" style="left:333.2px;top:376.66999999999996px" width="11" height="14" viewBox="0 0 11 14"><path d="M0.5 0.5 H7.3 L10.5 3.7 V13.5 H0.5 Z" fill="#fbfbfb" stroke="#b8b8b8"/><path d="M7.3 0.5 V3.7 H10.5" fill="#eee" stroke="#c8c8c8" stroke-width="0.8"/><circle cx="4.3" cy="5.8" r="2.7" fill="#b9c4ce"/><circle cx="4.3" cy="5.8" r="0.9" fill="#f4f4f4"/><circle cx="7.2" cy="9.4" r="2" fill="#a9b6c2"/><circle cx="7.2" cy="9.4" r="0.7" fill="#f4f4f4"/></svg>
<div class="t" style="left:351px;top:398.76px;color:#1a1a1a;letter-spacing:-0.3px">Bizagi.MD.PersistenceServices.dll</div>
<div class="t" style="left:618.5px;top:398.76px;color:#6d6d6d;letter-spacing:-0.2px">1/21/2021 4:41 PM</div>
<div class="t" style="left:777px;top:398.76px;color:#6d6d6d;letter-spacing:-0.1px">Application extension</div>
<div class="t" style="right:267.4px;top:398.76px;color:#6d6d6d;transform:scaleX(0.9);transform-origin:100% 0">201 KB</div>
<svg class="i" style="left:333.2px;top:397.15999999999997px" width="11" height="14" viewBox="0 0 11 14"><path d="M0.5 0.5 H7.3 L10.5 3.7 V13.5 H0.5 Z" fill="#fbfbfb" stroke="#b8b8b8"/><path d="M7.3 0.5 V3.7 H10.5" fill="#eee" stroke="#c8c8c8" stroke-width="0.8"/><circle cx="4.3" cy="5.8" r="2.7" fill="#b9c4ce"/><circle cx="4.3" cy="5.8" r="0.9" fill="#f4f4f4"/><circle cx="7.2" cy="9.4" r="2" fill="#a9b6c2"/><circle cx="7.2" cy="9.4" r="0.7" fill="#f4f4f4"/></svg>
<div class="t" style="left:351px;top:419.25px;color:#1a1a1a;letter-spacing:-0.3px">Bizagi.MD.Schemas.dll</div>
<div class="t" style="left:618.5px;top:419.25px;color:#6d6d6d;letter-spacing:-0.2px">1/21/2021 4:41 PM</div>
<div class="t" style="left:777px;top:419.25px;color:#6d6d6d;letter-spacing:-0.1px">Application extension</div>
<div class="t" style="right:267.4px;top:419.25px;color:#6d6d6d;transform:scaleX(0.9);transform-origin:100% 0">86 KB</div>
<svg class="i" style="left:333.2px;top:417.65px" width="11" height="14" viewBox="0 0 11 14"><path d="M0.5 0.5 H7.3 L10.5 3.7 V13.5 H0.5 Z" fill="#fbfbfb" stroke="#b8b8b8"/><path d="M7.3 0.5 V3.7 H10.5" fill="#eee" stroke="#c8c8c8" stroke-width="0.8"/><circle cx="4.3" cy="5.8" r="2.7" fill="#b9c4ce"/><circle cx="4.3" cy="5.8" r="0.9" fill="#f4f4f4"/><circle cx="7.2" cy="9.4" r="2" fill="#a9b6c2"/><circle cx="7.2" cy="9.4" r="0.7" fill="#f4f4f4"/></svg>
<div class="t" style="left:351px;top:439.74px;color:#1a1a1a;letter-spacing:-0.3px">Bizagi.MD.Services.dll</div>
<div class="t" style="left:618.5px;top:439.74px;color:#6d6d6d;letter-spacing:-0.2px">1/21/2021 4:41 PM</div>
<div class="t" style="left:777px;top:439.74px;color:#6d6d6d;letter-spacing:-0.1px">Application extension</div>
<div class="t" style="right:267.4px;top:439.74px;color:#6d6d6d;transform:scaleX(0.9);transform-origin:100% 0">7,428 KB</div>
<svg class="i" style="left:333.2px;top:438.14px" width="11" height="14" viewBox="0 0 11 14"><path d="M0.5 0.5 H7.3 L10.5 3.7 V13.5 H0.5 Z" fill="#fbfbfb" stroke="#b8b8b8"/><path d="M7.3 0.5 V3.7 H10.5" fill="#eee" stroke="#c8c8c8" stroke-width="0.8"/><circle cx="4.3" cy="5.8" r="2.7" fill="#b9c4ce"/><circle cx="4.3" cy="5.8" r="0.9" fill="#f4f4f4"/><circle cx="7.2" cy="9.4" r="2" fill="#a9b6c2"/><circle cx="7.2" cy="9.4" r="0.7" fill="#f4f4f4"/></svg>
<div class="t" style="left:351px;top:460.23px;color:#1a1a1a;letter-spacing:-0.3px">Bizagi.Metadata.Adapter.Migrator.dll</div>
<div class="t" style="left:618.5px;top:460.23px;color:#6d6d6d;letter-spacing:-0.2px">1/21/2021 4:41 PM</div>
<div class="t" style="left:777px;top:460.23px;color:#6d6d6d;letter-spacing:-0.1px">Application extension</div>
<div class="t" style="right:267.4px;top:460.23px;color:#6d6d6d;transform:scaleX(0.9);transform-origin:100% 0">43 KB</div>
<svg class="i" style="left:333.2px;top:458.63px" width="11" height="14" viewBox="0 0 11 14"><path d="M0.5 0.5 H7.3 L10.5 3.7 V13.5 H0.5 Z" fill="#fbfbfb" stroke="#b8b8b8"/><path d="M7.3 0.5 V3.7 H10.5" fill="#eee" stroke="#c8c8c8" stroke-width="0.8"/><circle cx="4.3" cy="5.8" r="2.7" fill="#b9c4ce"/><circle cx="4.3" cy="5.8" r="0.9" fill="#f4f4f4"/><circle cx="7.2" cy="9.4" r="2" fill="#a9b6c2"/><circle cx="7.2" cy="9.4" r="0.7" fill="#f4f4f4"/></svg>
<div class="t" style="left:351px;top:480.72px;color:#1a1a1a;letter-spacing:-0.3px">Bizagi.Metadata.dll</div>
<div class="t" style="left:618.5px;top:480.72px;color:#6d6d6d;letter-spacing:-0.2px">1/21/2021 4:41 PM</div>
<div class="t" style="left:777px;top:480.72px;color:#6d6d6d;letter-spacing:-0.1px">Application extension</div>
<div class="t" style="right:267.4px;top:480.72px;color:#6d6d6d;transform:scaleX(0.9);transform-origin:100% 0">18,724 KB</div>
<svg class="i" style="left:333.2px;top:479.12px" width="11" height="14" viewBox="0 0 11 14"><path d="M0.5 0.5 H7.3 L10.5 3.7 V13.5 H0.5 Z" fill="#fbfbfb" stroke="#b8b8b8"/><path d="M7.3 0.5 V3.7 H10.5" fill="#eee" stroke="#c8c8c8" stroke-width="0.8"/><circle cx="4.3" cy="5.8" r="2.7" fill="#b9c4ce"/><circle cx="4.3" cy="5.8" r="0.9" fill="#f4f4f4"/><circle cx="7.2" cy="9.4" r="2" fill="#a9b6c2"/><circle cx="7.2" cy="9.4" r="0.7" fill="#f4f4f4"/></svg>
<div class="t" style="left:351px;top:501.21px;color:#1a1a1a;letter-spacing:-0.3px">Bizagi.Modeler.HttpClientService.dll</div>
<div class="t" style="left:618.5px;top:501.21px;color:#6d6d6d;letter-spacing:-0.2px">1/21/2021 4:41 PM</div>
<div class="t" style="left:777px;top:501.21px;color:#6d6d6d;letter-spacing:-0.1px">Application extension</div>
<div class="t" style="right:267.4px;top:501.21px;color:#6d6d6d;transform:scaleX(0.9);transform-origin:100% 0">57 KB</div>
<svg class="i" style="left:333.2px;top:499.6099999999999px" width="11" height="14" viewBox="0 0 11 14"><path d="M0.5 0.5 H7.3 L10.5 3.7 V13.5 H0.5 Z" fill="#fbfbfb" stroke="#b8b8b8"/><path d="M7.3 0.5 V3.7 H10.5" fill="#eee" stroke="#c8c8c8" stroke-width="0.8"/><circle cx="4.3" cy="5.8" r="2.7" fill="#b9c4ce"/><circle cx="4.3" cy="5.8" r="0.9" fill="#f4f4f4"/><circle cx="7.2" cy="9.4" r="2" fill="#a9b6c2"/><circle cx="7.2" cy="9.4" r="0.7" fill="#f4f4f4"/></svg>
<div class="t" style="left:351px;top:521.70px;color:#1a1a1a;letter-spacing:-0.3px">BizAgi.OAuth2.dll</div>
<div class="t" style="left:618.5px;top:521.70px;color:#6d6d6d;letter-spacing:-0.2px">1/21/2021 4:41 PM</div>
<div class="t" style="left:777px;top:521.70px;color:#6d6d6d;letter-spacing:-0.1px">Application extension</div>
<div class="t" style="right:267.4px;top:521.70px;color:#6d6d6d;transform:scaleX(0.9);transform-origin:100% 0">125 KB</div>
<svg class="i" style="left:333.2px;top:520.0999999999999px" width="11" height="14" viewBox="0 0 11 14"><path d="M0.5 0.5 H7.3 L10.5 3.7 V13.5 H0.5 Z" fill="#fbfbfb" stroke="#b8b8b8"/><path d="M7.3 0.5 V3.7 H10.5" fill="#eee" stroke="#c8c8c8" stroke-width="0.8"/><circle cx="4.3" cy="5.8" r="2.7" fill="#b9c4ce"/><circle cx="4.3" cy="5.8" r="0.9" fill="#f4f4f4"/><circle cx="7.2" cy="9.4" r="2" fill="#a9b6c2"/><circle cx="7.2" cy="9.4" r="0.7" fill="#f4f4f4"/></svg>
<div class="t" style="left:351px;top:542.19px;color:#1a1a1a;letter-spacing:-0.3px">Bizagi.oData.Core.dll</div>
<div class="t" style="left:618.5px;top:542.19px;color:#6d6d6d;letter-spacing:-0.2px">1/21/2021 4:41 PM</div>
<div class="t" style="left:777px;top:542.19px;color:#6d6d6d;letter-spacing:-0.1px">Application extension</div>
<div class="t" style="right:267.4px;top:542.19px;color:#6d6d6d;transform:scaleX(0.9);transform-origin:100% 0">141 KB</div>
<svg class="i" style="left:333.2px;top:540.5899999999999px" width="11" height="14" viewBox="0 0 11 14"><path d="M0.5 0.5 H7.3 L10.5 3.7 V13.5 H0.5 Z" fill="#fbfbfb" stroke="#b8b8b8"/><path d="M7.3 0.5 V3.7 H10.5" fill="#eee" stroke="#c8c8c8" stroke-width="0.8"/><circle cx="4.3" cy="5.8" r="2.7" fill="#b9c4ce"/><circle cx="4.3" cy="5.8" r="0.9" fill="#f4f4f4"/><circle cx="7.2" cy="9.4" r="2" fill="#a9b6c2"/><circle cx="7.2" cy="9.4" r="0.7" fill="#f4f4f4"/></svg>
<div class="t" style="left:351px;top:562.68px;color:#1a1a1a;letter-spacing:-0.3px">BizAgi.Organization.dll</div>
<div class="t" style="left:618.5px;top:562.68px;color:#6d6d6d;letter-spacing:-0.2px">1/21/2021 4:41 PM</div>
<div class="t" style="left:777px;top:562.68px;color:#6d6d6d;letter-spacing:-0.1px">Application extension</div>
<div class="t" style="right:267.4px;top:562.68px;color:#6d6d6d;transform:scaleX(0.9);transform-origin:100% 0">399 KB</div>
<svg class="i" style="left:333.2px;top:561.0799999999999px" width="11" height="14" viewBox="0 0 11 14"><path d="M0.5 0.5 H7.3 L10.5 3.7 V13.5 H0.5 Z" fill="#fbfbfb" stroke="#b8b8b8"/><path d="M7.3 0.5 V3.7 H10.5" fill="#eee" stroke="#c8c8c8" stroke-width="0.8"/><circle cx="4.3" cy="5.8" r="2.7" fill="#b9c4ce"/><circle cx="4.3" cy="5.8" r="0.9" fill="#f4f4f4"/><circle cx="7.2" cy="9.4" r="2" fill="#a9b6c2"/><circle cx="7.2" cy="9.4" r="0.7" fill="#f4f4f4"/></svg>
<div class="t" style="left:351px;top:583.17px;color:#1a1a1a;letter-spacing:-0.3px">BizAgi.PALII.dll</div>
<div class="t" style="left:618.5px;top:583.17px;color:#6d6d6d;letter-spacing:-0.2px">1/21/2021 4:41 PM</div>
<div class="t" style="left:777px;top:583.17px;color:#6d6d6d;letter-spacing:-0.1px">Application extension</div>
<div class="t" style="right:267.4px;top:583.17px;color:#6d6d6d;transform:scaleX(0.9);transform-origin:100% 0">125 KB</div>
<svg class="i" style="left:333.2px;top:581.5699999999999px" width="11" height="14" viewBox="0 0 11 14"><path d="M0.5 0.5 H7.3 L10.5 3.7 V13.5 H0.5 Z" fill="#fbfbfb" stroke="#b8b8b8"/><path d="M7.3 0.5 V3.7 H10.5" fill="#eee" stroke="#c8c8c8" stroke-width="0.8"/><circle cx="4.3" cy="5.8" r="2.7" fill="#b9c4ce"/><circle cx="4.3" cy="5.8" r="0.9" fill="#f4f4f4"/><circle cx="7.2" cy="9.4" r="2" fill="#a9b6c2"/><circle cx="7.2" cy="9.4" r="0.7" fill="#f4f4f4"/></svg>
<div class="t" style="left:351px;top:603.66px;color:#1a1a1a;letter-spacing:-0.3px">Bizagi.Persistence.dll</div>
<div class="t" style="left:618.5px;top:603.66px;color:#6d6d6d;letter-spacing:-0.2px">1/21/2021 4:40 PM</div>
<div class="t" style="left:777px;top:603.66px;color:#6d6d6d;letter-spacing:-0.1px">Application extension</div>
<div class="t" style="right:267.4px;top:603.66px;color:#6d6d6d;transform:scaleX(0.9);transform-origin:100% 0">66 KB</div>
<svg class="i" style="left:333.2px;top:602.06px" width="11" height="14" viewBox="0 0 11 14"><path d="M0.5 0.5 H7.3 L10.5 3.7 V13.5 H0.5 Z" fill="#fbfbfb" stroke="#b8b8b8"/><path d="M7.3 0.5 V3.7 H10.5" fill="#eee" stroke="#c8c8c8" stroke-width="0.8"/><circle cx="4.3" cy="5.8" r="2.7" fill="#b9c4ce"/><circle cx="4.3" cy="5.8" r="0.9" fill="#f4f4f4"/><circle cx="7.2" cy="9.4" r="2" fill="#a9b6c2"/><circle cx="7.2" cy="9.4" r="0.7" fill="#f4f4f4"/></svg>
<div class="t" style="left:351px;top:624.15px;color:#1a1a1a;letter-spacing:-0.3px">BizAgi.Render.JQuery.dll</div>
<div class="t" style="left:618.5px;top:624.15px;color:#6d6d6d;letter-spacing:-0.2px">1/21/2021 4:41 PM</div>
<div class="t" style="left:777px;top:624.15px;color:#6d6d6d;letter-spacing:-0.1px">Application extension</div>
<div class="t" style="right:267.4px;top:624.15px;color:#6d6d6d;transform:scaleX(0.9);transform-origin:100% 0">408 KB</div>
<svg class="i" style="left:333.2px;top:622.55px" width="11" height="14" viewBox="0 0 11 14"><path d="M0.5 0.5 H7.3 L10.5 3.7 V13.5 H0.5 Z" fill="#fbfbfb" stroke="#b8b8b8"/><path d="M7.3 0.5 V3.7 H10.5" fill="#eee" stroke="#c8c8c8" stroke-width="0.8"/><circle cx="4.3" cy="5.8" r="2.7" fill="#b9c4ce"/><circle cx="4.3" cy="5.8" r="0.9" fill="#f4f4f4"/><circle cx="7.2" cy="9.4" r="2" fill="#a9b6c2"/><circle cx="7.2" cy="9.4" r="0.7" fill="#f4f4f4"/></svg>
<div class="t" style="left:351px;top:644.64px;color:#1a1a1a;letter-spacing:-0.3px">BizAgi.Render.Old.dll</div>
<div class="t" style="left:618.5px;top:644.64px;color:#6d6d6d;letter-spacing:-0.2px">1/21/2021 4:41 PM</div>
<div class="t" style="left:777px;top:644.64px;color:#6d6d6d;letter-spacing:-0.1px">Application extension</div>
<div class="t" style="right:267.4px;top:644.64px;color:#6d6d6d;transform:scaleX(0.9);transform-origin:100% 0">471 KB</div>
<svg class="i" style="left:333.2px;top:643.04px" width="11" height="14" viewBox="0 0 11 14"><path d="M0.5 0.5 H7.3 L10.5 3.7 V13.5 H0.5 Z" fill="#fbfbfb" stroke="#b8b8b8"/><path d="M7.3 0.5 V3.7 H10.5" fill="#eee" stroke="#c8c8c8" stroke-width="0.8"/><circle cx="4.3" cy="5.8" r="2.7" fill="#b9c4ce"/><circle cx="4.3" cy="5.8" r="0.9" fill="#f4f4f4"/><circle cx="7.2" cy="9.4" r="2" fill="#a9b6c2"/><circle cx="7.2" cy="9.4" r="0.7" fill="#f4f4f4"/></svg>
<div class="t" style="left:351px;top:665.13px;color:#1a1a1a;letter-spacing:-0.3px">BizAgi.Render.XML.dll</div>
<div class="t" style="left:618.5px;top:665.13px;color:#6d6d6d;letter-spacing:-0.2px">1/21/2021 4:41 PM</div>
<div class="t" style="left:777px;top:665.13px;color:#6d6d6d;letter-spacing:-0.1px">Application extension</div>
<div class="t" style="right:267.4px;top:665.13px;color:#6d6d6d;transform:scaleX(0.9);transform-origin:100% 0">260 KB</div>
<svg class="i" style="left:333.2px;top:663.5299999999999px" width="11" height="14" viewBox="0 0 11 14"><path d="M0.5 0.5 H7.3 L10.5 3.7 V13.5 H0.5 Z" fill="#fbfbfb" stroke="#b8b8b8"/><path d="M7.3 0.5 V3.7 H10.5" fill="#eee" stroke="#c8c8c8" stroke-width="0.8"/><circle cx="4.3" cy="5.8" r="2.7" fill="#b9c4ce"/><circle cx="4.3" cy="5.8" r="0.9" fill="#f4f4f4"/><circle cx="7.2" cy="9.4" r="2" fill="#a9b6c2"/><circle cx="7.2" cy="9.4" r="0.7" fill="#f4f4f4"/></svg>
<div class="t" style="left:351px;top:685.62px;color:#1a1a1a;letter-spacing:-0.3px">BizAgi.Render.XML.View.dll</div>
<div class="t" style="left:618.5px;top:685.62px;color:#6d6d6d;letter-spacing:-0.2px">1/21/2021 4:41 PM</div>
<div class="t" style="left:777px;top:685.62px;color:#6d6d6d;letter-spacing:-0.1px">Application extension</div>
<div class="t" style="right:267.4px;top:685.62px;color:#6d6d6d;transform:scaleX(0.9);transform-origin:100% 0">40 KB</div>
<svg class="i" style="left:333.2px;top:684.0199999999999px" width="11" height="14" viewBox="0 0 11 14"><path d="M0.5 0.5 H7.3 L10.5 3.7 V13.5 H0.5 Z" fill="#fbfbfb" stroke="#b8b8b8"/><path d="M7.3 0.5 V3.7 H10.5" fill="#eee" stroke="#c8c8c8" stroke-width="0.8"/><circle cx="4.3" cy="5.8" r="2.7" fill="#b9c4ce"/><circle cx="4.3" cy="5.8" r="0.9" fill="#f4f4f4"/><circle cx="7.2" cy="9.4" r="2" fill="#a9b6c2"/><circle cx="7.2" cy="9.4" r="0.7" fill="#f4f4f4"/></svg>
<div class="t" style="left:351px;top:706.11px;color:#1a1a1a;letter-spacing:-0.3px">BizAgi.Resources.dll</div>
<div class="t" style="left:618.5px;top:706.11px;color:#6d6d6d;letter-spacing:-0.2px">1/21/2021 4:40 PM</div>
<div class="t" style="left:777px;top:706.11px;color:#6d6d6d;letter-spacing:-0.1px">Application extension</div>
<div class="t" style="right:267.4px;top:706.11px;color:#6d6d6d;transform:scaleX(0.9);transform-origin:100% 0">149 KB</div>
<svg class="i" style="left:333.2px;top:704.5099999999999px" width="11" height="14" viewBox="0 0 11 14"><path d="M0.5 0.5 H7.3 L10.5 3.7 V13.5 H0.5 Z" fill="#fbfbfb" stroke="#b8b8b8"/><path d="M7.3 0.5 V3.7 H10.5" fill="#eee" stroke="#c8c8c8" stroke-width="0.8"/><circle cx="4.3" cy="5.8" r="2.7" fill="#b9c4ce"/><circle cx="4.3" cy="5.8" r="0.9" fill="#f4f4f4"/><circle cx="7.2" cy="9.4" r="2" fill="#a9b6c2"/><circle cx="7.2" cy="9.4" r="0.7" fill="#f4f4f4"/></svg>
<div class="b" style="left:1234px;top:82.5px;width:16px;height:636.3px;background:#f0f0f0"></div>
<div class="b" style="left:1234px;top:302.9px;width:15px;height:92px;background:#cdcdcd"></div>
<svg class="i" style="left:1238.5px;top:89.3px" width="7" height="5" viewBox="0 0 7 5"><path d="M0.7 4.3 L3.5 1.2 L6.3 4.3" fill="none" stroke="#3c3c3c" stroke-width="1.5"/></svg>
<svg class="i" style="left:1238.5px;top:709px" width="7" height="5" viewBox="0 0 7 5"><path d="M0.7 0.7 L3.5 3.8 L6.3 0.7" fill="none" stroke="#3c3c3c" stroke-width="1.5"/></svg>
<div class="t" style="left:15px;top:724.60px;color:#333;letter-spacing:-0.2px">193 items</div>
<div class="b" style="left:74.5px;top:724px;width:1px;height:13px;background:#f0f0f0"></div>
<div class="t" style="left:86px;top:724.60px;color:#333;letter-spacing:-0.2px">1 item selected&nbsp;&nbsp;2.57 KB</div>
<div class="b" style="left:220px;top:724px;width:1px;height:13px;background:#f3f3f3"></div>
<div class="b" style="left:1203px;top:719px;width:22px;height:25px;background:#cce8ff;border:1.5px solid #86c6f0;border-radius:1px"></div>
<svg class="i" style="left:1208px;top:725px" width="14" height="13" viewBox="0 0 14 13"><rect x="0" y="0" width="2" height="13" fill="#d8d8d8"/><g fill="#9a9a9a"><rect x="3" y="0.5" width="5" height="1"/><rect x="9" y="0.5" width="4" height="1"/><rect x="3" y="3" width="5" height="1" fill="#b0b0b0"/><rect x="9" y="3" width="4" height="1" fill="#b0b0b0"/><rect x="3" y="5.5" width="5" height="1"/><rect x="9" y="5.5" width="4" height="1"/><rect x="3" y="8" width="5" height="1" fill="#b0b0b0"/><rect x="9" y="8" width="4" height="1" fill="#b0b0b0"/><rect x="3" y="10.5" width="5" height="1"/><rect x="9" y="10.5" width="4" height="1"/></g><rect x="0" y="5.5" width="2" height="1.5" fill="#e06a4a"/><rect x="0" y="3" width="2" height="1" fill="#e0b050"/></svg>
<svg class="i" style="left:1228.5px;top:725px" width="14" height="11" viewBox="0 0 14 11"><rect x="0" y="0" width="14" height="11" fill="#ddd"/><rect x="1" y="1" width="12" height="9" fill="#dbe8f3"/><rect x="1" y="1" width="12" height="4" fill="#3d8ee6"/><path d="M1 4 Q5 4 9 7 Q11 8 13 8 V10 H1Z" fill="#1f5a3a"/><path d="M7 8.5 Q10 8 13 8.5 V10 H7Z" fill="#b8c8d8"/></svg>
<div class="b" style="left:846px;top:145.2px;width:1.2px;height:453.5px;background:#8c8c8c"></div>
<div class="b" style="left:598.5px;top:597.4px;width:248.7px;height:1.4px;background:#8c8c8c"></div>
<div class="b" style="left:595px;top:142.3px;width:251px;height:455.3px;background:#eeeeee;border:1px solid #c2c2c2;box-shadow:inset 0 0 0 1px #f9f9f9"></div>
<div class="b" style="left:597px;top:252.7px;width:247.5px;height:21.6px;background:#ffffff"></div>
<div class="t" style="left:628px;top:149.70px;color:#000;font-weight:bold;letter-spacing:-0.3px">Open</div>
<div class="t" style="left:628px;top:171.30px;color:#000;letter-spacing:-0.2px">Share with Skype</div>
<div class="t" style="left:628px;top:192.80px;color:#000;letter-spacing:-0.2px">Move to OneDrive</div>
<svg class="i" style="left:829px;top:192.0px" width="9" height="14" viewBox="0 0 9 14"><path d="M0.7 0.7 L7.3 6.8 L0.7 12.9" fill="none" stroke="#1a1a1a" stroke-width="1.05"/></svg>
<div class="t" style="left:628px;top:214.30px;color:#000;letter-spacing:-0.2px">7-Zip</div>
<svg class="i" style="left:829px;top:213.5px" width="9" height="14" viewBox="0 0 9 14"><path d="M0.7 0.7 L7.3 6.8 L0.7 12.9" fill="none" stroke="#1a1a1a" stroke-width="1.05"/></svg>
<div class="t" style="left:628px;top:235.80px;color:#000;letter-spacing:-0.2px">CRC SHA</div>
<svg class="i" style="left:829px;top:235.0px" width="9" height="14" viewBox="0 0 9 14"><path d="M0.7 0.7 L7.3 6.8 L0.7 12.9" fill="none" stroke="#1a1a1a" stroke-width="1.05"/></svg>
<div class="t" style="left:628px;top:257.30px;color:#000;letter-spacing:-0.2px">Edit with Notepad++</div>
<div class="t" style="left:628px;top:278.80px;color:#000;letter-spacing:-0.2px">Select Left File for Compare</div>
<div class="t" style="left:628px;top:307.30px;color:#000;letter-spacing:-0.2px">Scan for Viruses...</div>
<div class="t" style="left:628px;top:328.80px;color:#000;letter-spacing:-0.2px">Share</div>
<div class="t" style="left:628px;top:350.30px;color:#000;letter-spacing:-0.2px">Open with...</div>
<div class="t" style="left:628px;top:379.10px;color:#000;letter-spacing:-0.2px">Give access to</div>
<svg class="i" style="left:829px;top:378.3px" width="9" height="14" viewBox="0 0 9 14"><path d="M0.7 0.7 L7.3 6.8 L0.7 12.9" fill="none" stroke="#1a1a1a" stroke-width="1.05"/></svg>
<div class="t" style="left:628px;top:400.30px;color:#000;letter-spacing:-0.2px">Restore previous versions</div>
<div class="t" style="left:628px;top:428.90px;color:#000;letter-spacing:-0.2px">Send to</div>
<svg class="i" style="left:829px;top:428.1px" width="9" height="14" viewBox="0 0 9 14"><path d="M0.7 0.7 L7.3 6.8 L0.7 12.9" fill="none" stroke="#1a1a1a" stroke-width="1.05"/></svg>
<div class="t" style="left:628px;top:457.30px;color:#000;letter-spacing:-0.2px">Cut</div>
<div class="t" style="left:628px;top:478.50px;color:#000;letter-spacing:-0.2px">Copy</div>
<div class="t" style="left:628px;top:506.60px;color:#000;letter-spacing:-0.2px">Create shortcut</div>
<div class="t" style="left:628px;top:528.10px;color:#000;letter-spacing:-0.2px">Delete</div>
<div class="t" style="left:628px;top:549.30px;color:#000;letter-spacing:-0.2px">Rename</div>
<div class="t" style="left:628px;top:577.90px;color:#000;letter-spacing:-0.2px">Properties</div>
<div class="b" style="left:604px;top:298.3px;width:233px;height:1px;background:#bdbdbd"></div>
<div class="b" style="left:604px;top:370.0px;width:233px;height:1px;background:#bdbdbd"></div>
<div class="b" style="left:604px;top:420.0px;width:233px;height:1px;background:#bdbdbd"></div>
<div class="b" style="left:604px;top:448.0px;width:233px;height:1px;background:#bdbdbd"></div>
<div class="b" style="left:604px;top:498.0px;width:233px;height:1px;background:#bdbdbd"></div>
<div class="b" style="left:604px;top:568.8px;width:233px;height:1px;background:#bdbdbd"></div>
<svg class="i" style="left:604.5px;top:169.5px" width="16" height="16" viewBox="0 0 16 16"><circle cx="8" cy="8" r="6.6" fill="#0a8fd8"/><circle cx="4.6" cy="4.6" r="3.8" fill="#16a0e6"/><circle cx="11.4" cy="11.4" r="3.8" fill="#0a78c8"/><circle cx="7.5" cy="7.5" r="5" fill="#14a0e8"/><text x="8" y="12.2" font-size="11" text-anchor="middle" fill="#fff" font-family="Liberation Sans">S</text></svg>
<svg class="i" style="left:604.5px;top:194.5px" width="15" height="10" viewBox="0 0 15 10"><path d="M2.5 9.5 Q0 9.5 0.2 7.2 Q0.6 5 3 5 Q3.6 1.3 7 1 Q9.7 0.9 10.9 3.4 Q14.3 3 14.8 6.5 Q15 9.5 12.5 9.5 Z" fill="#0c6ac4"/><path d="M2.5 9.5 Q0 9.5 0.2 7.2 Q0.6 5 3.5 5.3 L8 5.5 Q12 4.5 14.8 6.5 Q15 9.5 12.5 9.5 Z" fill="#2b9af0"/></svg>
<svg class="i" style="left:604.5px;top:277.5px" width="15" height="10" viewBox="0 0 15 10"><path d="M14.6 9.5 Q13 2.2 6.5 3.2" fill="none" stroke="#d8191f" stroke-width="2.4"/><path d="M0.3 5.8 L7.5 0.2 L8.2 8 Z" fill="#ee1c24"/></svg>
<svg class="i" style="left:604.5px;top:255.5px" width="15" height="15" viewBox="0 0 15 15"><path d="M0.5 0.5 H9 L11.5 3 V14.5 H0.5 Z" fill="#f2f2f2" stroke="#9a9a9a" stroke-width="0.8"/><defs><linearGradient id="npg" x1="0" y1="0" x2="0" y2="1"><stop offset="0" stop-color="#f4f4f4"/><stop offset="0.35" stop-color="#e8f4d8"/><stop offset="0.6" stop-color="#a0dc60"/><stop offset="1" stop-color="#22a818"/></linearGradient></defs><rect x="0.9" y="0.9" width="9.7" height="13.2" fill="url(#npg)"/><path d="M3 4 V8.5 M3 6.5 H7.5" fill="none" stroke="#888" stroke-width="1.1"/><path d="M8 10.5 L13.8 1" stroke="#f0a818" stroke-width="1.8"/><path d="M13 0.3 L14.6 1.3" stroke="#c04040" stroke-width="1.2"/></svg>
<svg class="i" style="left:604px;top:327.5px" width="16" height="14" viewBox="0 0 16 14"><path d="M0.8 4.5 V13.2 H11.5 V11" fill="none" stroke="#222" stroke-width="1.3"/><path d="M3.2 11 Q4 5.5 10.2 5 V2 L15 6.3 L10.2 10.5 V7.8 Q6 7.8 3.2 11 Z" fill="none" stroke="#222" stroke-width="1.2" stroke-linejoin="round"/></svg>
</body></html>
